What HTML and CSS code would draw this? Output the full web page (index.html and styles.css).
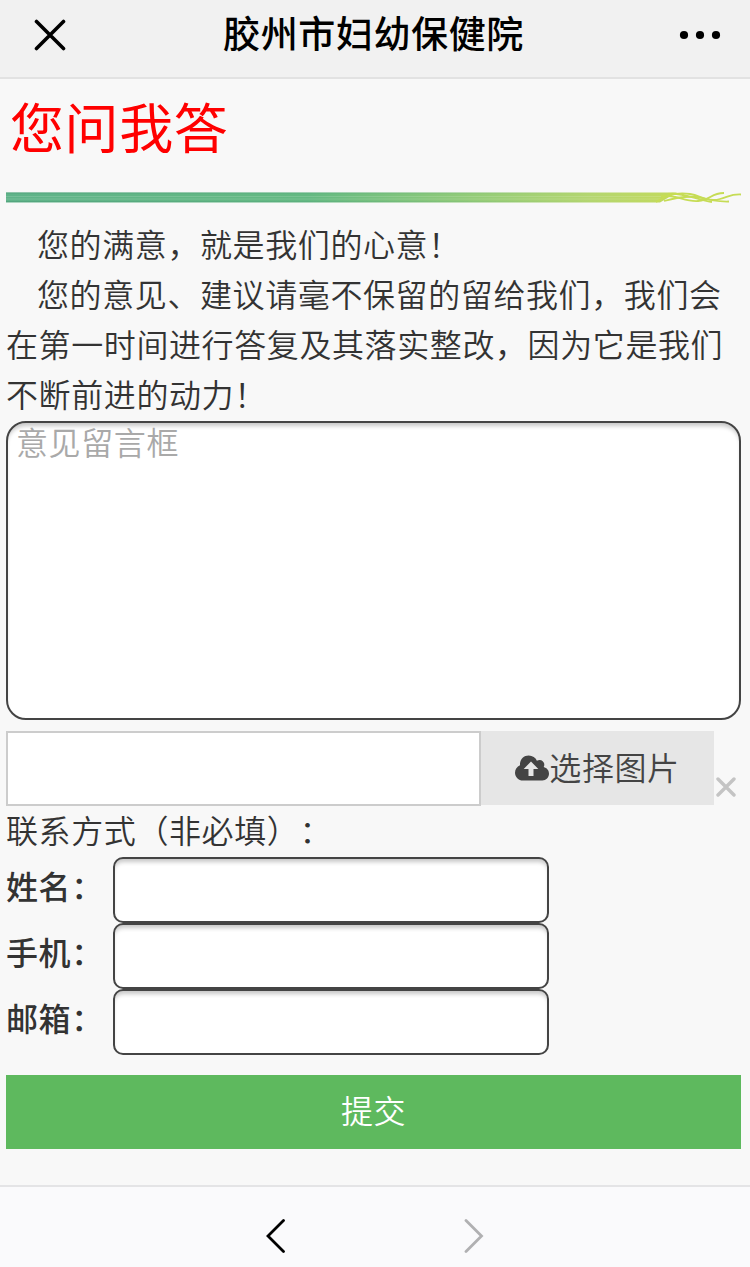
FILE: index.html
```html
<!DOCTYPE html>
<html lang="zh-CN">
<head>
    <meta charset="UTF-8">
    <meta name="viewport" content="width=device-width, initial-scale=1.0">
    <title>胶州市妇幼保健院</title>
    <link rel="stylesheet" href="styles.css">
</head>
<body>
    <header class="topbar">
        <svg class="icon-close" width="32" height="32" viewBox="0 0 32 32">
            <path d="M2.5 2.5L29.5 29.5M29.5 2.5L2.5 29.5" stroke="#000" stroke-width="3.6" stroke-linecap="round"/>
        </svg>
        <h1>胶州市妇幼保健院</h1>
        <svg class="icon-more" width="42" height="10" viewBox="0 0 42 10">
            <circle cx="5" cy="5" r="4.1"/>
            <circle cx="21" cy="5" r="4.1"/>
            <circle cx="37" cy="5" r="4.1"/>
        </svg>
    </header>

    <main class="content">
        <h2 class="title">您问我答</h2>
        <svg class="divider" width="735" height="11" viewBox="0 0 735 11">
            <defs>
                <linearGradient id="bar">
                    <stop offset="0" stop-color="#5fb389"/>
                    <stop offset="0.45" stop-color="#64b982"/>
                    <stop offset="0.7" stop-color="#94cc78"/>
                    <stop offset="0.87" stop-color="#b4d670"/>
                    <stop offset="1" stop-color="#c3da5c"/>
                </linearGradient>
                <linearGradient id="edge">
                    <stop offset="0" stop-color="#4d9c78"/>
                    <stop offset="1" stop-color="#4d9c78" stop-opacity="0"/>
                </linearGradient>
            </defs>
            <path d="M0 0.5H671L654 10.5H0Z" fill="url(#bar)"/>
            <path d="M0 0.5H600V1.5H0ZM0 9H600V10H0Z" fill="url(#edge)" opacity="0.6"/>
            <path d="M0 4.5H660M0 7H656" stroke="#fff" stroke-width="0.7" opacity="0.2"/>
            <g fill="none" stroke="#c6dc55" stroke-width="1.8">
                <path d="M650 10C660 3 672 0 684 2S700 10 723 9.5"/>
                <path d="M655 4C670 2 678 10 692 9S704 1 718 1"/>
                <path d="M658 9C672 5 680 4 690 5S704 10 714 7S726 2 735 2.5"/>
                <path d="M662 2C676 0 688 7 706 10"/>
            </g>
        </svg>

        <div class="intro">
            <p>您的满意，就是我们的心意！</p>
            <p>您的意见、建议请毫不保留的留给我们，我们会在第一时间进行答复及其落实整改，因为它是我们不断前进的动力！</p>
        </div>

        <form class="form">
            <textarea class="message" placeholder="意见留言框"></textarea>

            <div class="upload">
                <input class="file-name" type="text" readonly>
                <button class="choose" type="button">
                    <svg width="34" height="26" viewBox="0 0 34 26">
                        <path d="M8 25.5C3.5 25.5 0 22 0 17.7C0 14.4 2 11.6 5 10.3C4.6 4.3 8.7 0.4 13.7 0.4C17.5 0.4 20.5 2.5 21.9 5.7C25.5 3.5 29.5 6 29.3 10C29.3 10.8 29 11.5 28.7 12.1C31.8 12.9 34 15.5 34 18.8C34 22.5 31 25.5 27.3 25.5Z" fill="#444"/>
                        <path d="M16 6.5L23.3 14H18.5V21H13.5V14H8.7Z" fill="#e6e6e6"/>
                    </svg>
                    <span>选择图片</span>
                </button>
                <svg class="icon-remove" width="20" height="20" viewBox="0 0 20 20">
                    <path d="M2 2L18 18M18 2L2 18" stroke="#c4c4c4" stroke-width="3.4" stroke-linecap="round"/>
                </svg>
            </div>

            <p class="contact">联系方式（非必填）：</p>
            <div class="field">
                <label for="name">姓名：</label>
                <input id="name" type="text">
            </div>
            <div class="field">
                <label for="phone">手机：</label>
                <input id="phone" type="text">
            </div>
            <div class="field">
                <label for="email">邮箱：</label>
                <input id="email" type="text">
            </div>

            <button class="submit" type="button">提交</button>
        </form>
    </main>

    <footer class="bottombar">
        <svg width="20" height="34" viewBox="0 0 20 34">
            <path d="M17.5 1.5L2 17L17.5 32.5" fill="none" stroke="#000" stroke-width="2.8" stroke-linecap="round"/>
        </svg>
        <svg width="20" height="34" viewBox="0 0 20 34">
            <path d="M2 1.5L17.5 17L2 32.5" fill="none" stroke="#b0b0b2" stroke-width="2.8" stroke-linecap="round"/>
        </svg>
    </footer>
</body>
</html>
```

FILE: styles.css
```css
* {
    box-sizing: border-box;
}
body {
    margin: 0;
    height: 1267px;
    display: flex;
    flex-direction: column;
    background-color: #f8f8f8;
    color: #333;
    font-family: "Liberation Sans", "Noto Sans CJK SC", sans-serif;
    font-size: 32px;
    font-weight: 350;
    letter-spacing: 0.6px;
    text-spacing-trim: space-all;
}
h1, h2, p {
    margin: 0;
}
svg {
    display: block;
    flex: none;
}
input, textarea, button {
    font: inherit;
    letter-spacing: inherit;
    color: inherit;
    margin: 0;
    outline: none;
}

/* top bar */
.topbar {
    height: 79px;
    flex: none;
    display: flex;
    align-items: center;
    justify-content: space-between;
    padding: 0 29px 8px 34px;
    background-color: #f1f1f1;
    border-bottom: 2px solid #e2e2e2;
}
.topbar h1 {
    padding: 3px 0 0 2px;
    font-size: 37px;
    line-height: 60px;
    font-weight: 500;
    color: #000;
}

/* page */
.content {
    flex: 1;
    padding: 0 9px 0 6px;
}
.title {
    height: 113px;
    padding: 17px 0 0 4px;
    font-size: 54px;
    line-height: 68px;
    font-weight: 400;
    letter-spacing: 0.6px;
    color: #f00;
}
.intro {
    padding-top: 18px;
    line-height: 50px;
}
.intro p {
    text-indent: 31px;
}
.form {
    display: flex;
    flex-direction: column;
}
.message {
    height: 299px;
    padding: 0 8px;
    border: 2px solid #444;
    border-radius: 20px;
    background-color: #fff;
    box-shadow: inset 0 5px 4px -2px rgba(0,0,0,0.22);
    line-height: 42px;
    resize: none;
}
.message::placeholder {
    color: #a9a9a9;
}

.upload {
    display: flex;
    align-items: flex-start;
    height: 75px;
    margin-top: 11px;
}
.file-name {
    width: 475px;
    height: 75px;
    border: 2px solid #ccc;
    background-color: #fff;
}
.choose {
    width: 233px;
    height: 74px;
    display: flex;
    align-items: center;
    justify-content: center;
    padding: 0;
    border: none;
    background-color: #e6e6e6;
    color: #444;
}
.choose span {
    padding-bottom: 5px;
}
.icon-remove {
    margin: 46px 0 0 2px;
}

.contact {
    height: 51px;
    line-height: 52px;
}
.field {
    display: flex;
    height: 66px;
}
.field label {
    width: 107px;
    line-height: 63px;
    font-weight: 500;
}
.field input {
    width: 436px;
    height: 66px;
    border: 2px solid #444;
    border-radius: 10px;
    background-color: #fff;
    box-shadow: inset 0 5px 4px -2px rgba(0,0,0,0.22);
}
.submit {
    height: 74px;
    margin-top: 20px;
    padding: 0 0 6px;
    border: none;
    background-color: #5eb95e;
    color: #fff;
}

/* bottom bar */
.bottombar {
    height: 82px;
    flex: none;
    display: flex;
    justify-content: center;
    gap: 178px;
    padding-top: 32px;
    background-color: #fafafc;
    border-top: 2px solid #e4e4e6;
}
```
